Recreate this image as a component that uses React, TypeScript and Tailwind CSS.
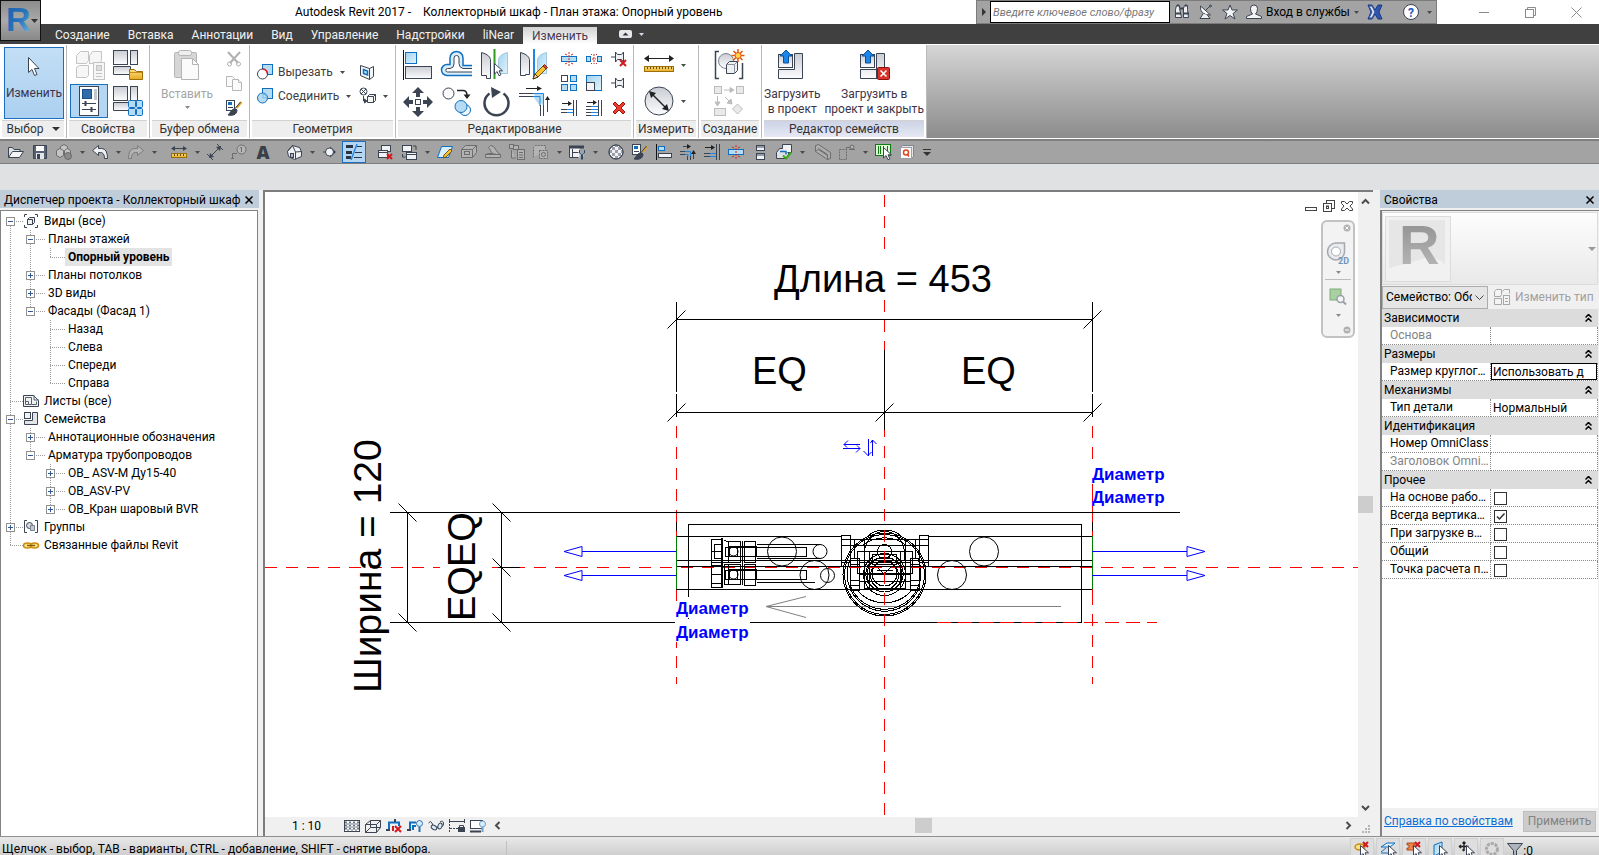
import React from "react";

type Kids = { children?: React.ReactNode };

const INK = "#3b4453";
const BLUE = "#0f6fc0";
const SKY = "#b5dcf3";

function Svg({ w = 16, h, children }: Kids & { w?: number; h?: number }) {
  const hh = h ?? w;
  return (
    <svg width={w} height={hh} viewBox={`0 0 ${w} ${hh}`} fill="none" stroke={INK} aria-hidden="true" className="shrink-0 overflow-visible">
      {children}
    </svg>
  );
}

function Caret({ color = "#4a4a4a" }: { color?: string }) {
  return (
    <svg width="5" height="3" viewBox="0 0 5 3" aria-hidden="true" className="shrink-0">
      <path d="M0 0h5L2.5 3z" fill={color} />
    </svg>
  );
}

function Cursor({ x, y }: { x: number; y: number }) {
  return (
    <path
      transform={`translate(${x} ${y})`}
      d="M.5.5v10.5l2.6-2.4 1.9 4.2 1.9-.9-1.9-4.1h3.5z"
      fill="#fff"
      stroke={INK}
    />
  );
}

function RedX({ x, y, s = 6 }: { x: number; y: number; s?: number }) {
  return (
    <path
      d={`M${x} ${y}l${s} ${s}M${x + s} ${y}l${-s} ${s}`}
      stroke="#d3181f"
      strokeWidth="2"
    />
  );
}

const Gradients = () => (
  <svg width="0" height="0" className="absolute" aria-hidden="true">
    <defs>
      <linearGradient id="steel" x1="0" y1="0" x2="0" y2="1">
        <stop offset="0" stopColor="#c9ccd3" />
        <stop offset="1" stopColor="#fdfdfe" />
      </linearGradient>
      <linearGradient id="sky" x1="0" y1="0" x2="1" y2="1">
        <stop offset="0" stopColor="#9fd3ef" />
        <stop offset="1" stopColor="#e4f4fc" />
      </linearGradient>
      <linearGradient id="gold" x1="0" y1="0" x2="0" y2="1">
        <stop offset="0" stopColor="#fbe08a" />
        <stop offset="1" stopColor="#e8ab1c" />
      </linearGradient>
      <linearGradient id="logo" x1="0" y1="0" x2="1" y2="1">
        <stop offset="0" stopColor="#1a5ea6" />
        <stop offset="0.55" stopColor="#2774bd" />
        <stop offset="1" stopColor="#7fc0e2" />
      </linearGradient>
      <linearGradient id="greyLogo" x1="0" y1="0" x2="0" y2="1">
        <stop offset="0" stopColor="#8c8c8c" />
        <stop offset="1" stopColor="#bcbcbc" />
      </linearGradient>
    </defs>
  </svg>
);

/* ---------- large ribbon icons ---------- */

const FamilyTypesGrey = () => (
  <Svg w={32}>
    <g stroke="#c4c4c4" fill="#f6f6f6">
      <path d="M2.5 6.5l4-4h8v9l-2 3h-10z" />
      <path d="M15.500 6.500l3-4h9v9l-2 3h-10z" />
      <path d="M2.500 18.500l3-2h9v10l-2 2h-10z" />
      <rect x="19.500" y="13.500" width="11" height="17" />
      <rect x="22.500" y="16.500" width="5" height="5" fill="#ddd" />
      <path d="M22 24.500h6M22 27.500h6" />
    </g>
  </Svg>
);

const PropsPalette = () => (
  <Svg w={24} h={32}>
    <rect x="2.500" y="1.500" width="19" height="29" fill="#fff" />
    <rect x="5.500" y="4.500" width="9" height="9" fill="#2f6ca8" stroke="#1d4e86" />
    <rect x="17" y="4" width="3" height="11" fill="#c2c6cd" stroke="none" />
    <path d="M5 18.500h14M5 24.500h14" />
    <path d="M8.500 16v5M14.500 22v5" strokeWidth="2" />
  </Svg>
);

const PanelsIcon = ({ children }: Kids) => (
  <Svg w={32}>
    <rect x="1.500" y="1.500" width="14" height="14" fill="url(#steel)" />
    <rect x="18.500" y="1.500" width="7" height="14" fill="url(#steel)" />
    <path d="M1.500 17.500h17v8h-17z" fill="url(#steel)" />
    {children}
  </Svg>
);

const FolderCategory = () => (
  <PanelsIcon>
    <path d="M17.500 20.500h5l2 2h6v8h-13z" fill="url(#gold)" stroke="#9c6f0b" />
    <path d="M17 23.500h13" stroke="#c18f1a" />
  </PanelsIcon>
);

const TypesBlue = () => (
  <PanelsIcon>
    <g fill={SKY} stroke={BLUE}>
      <rect x="16.500" y="15.500" width="7" height="7" rx="1" />
      <rect x="24.500" y="15.500" width="6" height="7" rx="1" />
      <rect x="16.500" y="23.500" width="7" height="7" rx="1" />
      <rect x="24.500" y="23.500" width="6" height="7" rx="1" />
    </g>
  </PanelsIcon>
);

const PasteGrey = () => (
  <Svg w={28} h={32}>
    <g stroke="#b4b4b4">
      <rect x="1.500" y="3.500" width="22" height="25" rx="1" fill="#d6d6d6" />
      <rect x="5.500" y="1.500" width="13" height="5" rx="2" fill="#eee" />
      <path d="M8.500 9.500h11l6 6v15h-17z" fill="#fbfbfb" />
      <path d="M19.500 9.500v6h6" />
    </g>
  </Svg>
);

const CutGrey = () => (
  <Svg>
    <g stroke="#b0b0b0">
      <path d="M2 1l10 11M14 1L4 12" strokeWidth="2" />
      <circle cx="3.500" cy="13" r="2" />
      <circle cx="12.500" cy="13" r="2" />
    </g>
  </Svg>
);

const CopyGrey = () => (
  <Svg>
    <g stroke="#b8b8b8" fill="#fafafa">
      <path d="M.5 1.500h6l2 2v8h-8z" />
      <path d="M6.500 4.500h6l3 3v8h-9z" />
      <path d="M12.500 4.500v3h3" />
    </g>
  </Svg>
);

const MatchType = () => (
  <Svg>
    <rect x=".5" y=".5" width="8" height="10" fill="#fff" />
    <rect x="2" y="2" width="4" height="3" fill={BLUE} stroke="none" />
    <path d="M2 7.500h5" />
    <path d="M15.500 2l-5 6" stroke="#e0a21c" strokeWidth="2" />
    <path d="M14.500 2l-5 6" stroke={INK} strokeWidth="1" />
    <path d="M10 9c-4-1-5 3-8 6 4 1 9 0 9-5z" fill={INK} />
  </Svg>
);

const CutGeom = () => (
  <Svg>
    <rect x="5.500" y=".5" width="10" height="10" fill={SKY} stroke={BLUE} />
    <circle cx="5.500" cy="10" r="5" fill="#fff" />
    <path d="M5.500 5a5 5 0 0 1 5 5" stroke="#e0161c" strokeWidth="1.500" />
  </Svg>
);

const JoinGeom = () => (
  <Svg>
    <rect x="5.500" y=".5" width="10" height="10" fill={SKY} stroke={BLUE} />
    <circle cx="5.500" cy="10" r="5" fill={SKY} stroke={BLUE} />
    <path d="M6 6v4h4a5 5 0 0 0-4-4" fill={SKY} stroke="#7dbde4" />
  </Svg>
);

const CutOpening = () => (
  <Svg>
    <path d="M1.500 1.500l9 3 4-2v10l-4 3-9-4z" fill="#f4f5f7" />
    <path d="M10.500 4.500v11" />
    <path d="M4.500 5.500l4 1.500v4l-4-1.500z" fill={SKY} stroke={BLUE} strokeWidth="1.500" />
  </Svg>
);

const SplitFace = () => (
  <Svg w={18}>
    <circle cx="4.500" cy="4.500" r="3.500" />
    <path d="M2 2l5 5M7 2L2 7M4.500 9v5H7" />
    <path d="M5.500 12l2.500 2-2.500 2z" fill={INK} />
    <path d="M8.500 9.500l2-2h6v6l-2 2h-6z" fill="#f7f7f8" />
    <path d="M8.500 9.500h6v6M14.500 9.500l2-2" />
  </Svg>
);

const AlignBig = () => (
  <Svg w={32}>
    <path d="M1.500 1v30" stroke="#111" strokeWidth="1" />
    <rect x="3.500" y="3.500" width="11" height="11" fill="url(#sky)" stroke={BLUE} />
    <rect x="3.500" y="17.500" width="26" height="12" fill="url(#steel)" />
  </Svg>
);

const OffsetBig = () => (
  <Svg w={32}>
    <path d="M31 16.500h-9V9a6.500 6.500 0 0 0-13 0v6.500H6a5 5 0 0 0 0 11h25" stroke={BLUE} fill="#d9eefa" strokeWidth="1.500" />
    <path d="M31 19.500h-9q-4-1-4-5V9a2.500 2.500 0 0 0-5 0v6q0 4-4 4.500H6.500a1.500 1.500 0 0 0 0 3.500H31" fill="#fff" />
  </Svg>
);

const MirrorPick = () => (
  <Svg w={32}>
    <path d="M1.500 3.500q8 2 9 7v19h-4v-3h-5z" fill="url(#steel)" />
    <path d="M27.500 3.500q-8 2-9 7v14h9z" fill="url(#sky)" stroke="#9fc6de" />
    <path d="M14.500 0v30" stroke="#2f9a1e" strokeWidth="2" />
    <Cursor x={14} y={14} />
  </Svg>
);

const Pencil = ({ x, y }: { x: number; y: number }) => (
  <g transform={`translate(${x} ${y})`}>
    <path d="M0 15l2-5L11 1l3 3-9 9z" fill="#f7c331" stroke="#7b5310" />
    <path d="M0 15l2-5 3 3z" fill="#f8e2b8" stroke="#4a3510" />
    <path d="M10 2l1.500-1.500 3 3L13 5z" fill="#d64a3a" stroke="#7b2a10" />
  </g>
);

const MirrorDraw = () => (
  <Svg w={32}>
    <path d="M1.500 3.500q8 2 9 7v15h-4v1h-5z" fill="url(#steel)" />
    <path d="M27.500 3.500q-8 2-9 7v14h9z" fill="url(#sky)" stroke="#9fc6de" />
    <path d="M15 0v30" stroke="#1b86e8" strokeWidth="2" />
    <Pencil x={14} y={15} />
  </Svg>
);

const MoveBig = () => (
  <Svg w={32}>
    <g fill={INK} stroke="none">
      <path d="M16 1l6 6h-4v4h-4V7h-4z" />
      <path d="M16 31l6-6h-4v-4h-4v4h-4z" />
      <path d="M1 16l6-6v4h4v4H7v4z" />
      <path d="M31 16l-6-6v4h-4v4h4v4z" />
    </g>
    <rect x="13.500" y="13.500" width="5" height="5" fill="#fff" />
  </Svg>
);

const CopyBig = () => (
  <Svg w={32}>
    <circle cx="7.500" cy="7.500" r="5.500" fill="#fafafa" />
    <path d="M16 4.500h6q4 0 4 5" strokeWidth="1.500" stroke="#222" />
    <path d="M22.500 8.500h7L26 13z" fill="#222" stroke="none" />
    <circle cx="24" cy="24" r="5.500" fill="#eef8fd" stroke={BLUE} />
    <circle cx="20" cy="20.500" r="6" fill={SKY} stroke={BLUE} />
  </Svg>
);

const RotateBig = () => (
  <Svg w={32}>
    <path d="M9.500 7.500a12 12 0 1 0 14 0" strokeWidth="2.500" />
    <path d="M11 1l10 5-9 6z" fill={INK} stroke="none" />
  </Svg>
);

const TrimBig = () => (
  <Svg w={32}>
    <path d="M7 2.500h14" stroke="#222" />
    <path d="M18 0l5 2.500L18 5z" fill="#222" stroke="none" />
    <path d="M0 7.500h14M0 10.500h14" />
    <path d="M14 7.500h10.500V20M14 10.500h7V20" stroke="#1b86e8" strokeWidth="1" fill={SKY} />
    <path d="M21.500 19v11M24.500 19v11" />
    <path d="M28.500 12v14" />
    <path d="M26 14l2.500-4 2.500 4z" fill="#222" stroke="none" />
  </Svg>
);

const SplitSmall = () => (
  <Svg>
    <rect x=".5" y="5.500" width="15" height="5" fill={SKY} stroke={BLUE} />
    <path d="M8 1v14" stroke="#cf2c1a" strokeDasharray="2 1" />
    <path d="M4 3l2 1M12 3l-2 1M4 13l2-1M12 13l-2-1" stroke="#cf2c1a" />
  </Svg>
);

const SplitGap = () => (
  <Svg>
    <rect x=".5" y="5.500" width="4" height="5" fill={SKY} stroke={BLUE} />
    <rect x="11.500" y="5.500" width="4" height="5" fill={SKY} stroke={BLUE} />
    <path d="M8 3v10M6 8h4" stroke="#cf2c1a" strokeDasharray="2 1" />
    <path d="M5 3l1 1M11 3l-1 1M5 13l1-1M11 13l-1-1" stroke="#cf2c1a" />
  </Svg>
);

const PinBody = ({ c = INK }: { c?: string }) => (
  <g stroke={c} fill="#eef0f3">
    <path d="M0 8h5" />
    <path d="M4.500 3v10l2-2.500h4l2 2.500V3l-2 2.500h-4z" />
  </g>
);

const Unpin = () => (
  <Svg>
    <g transform="translate(0 -2)">
      <PinBody />
    </g>
    <RedX x={9} y={9} />
  </Svg>
);
const Pin = () => (
  <Svg>
    <PinBody />
  </Svg>
);

const ArrayIcon = () => (
  <Svg>
    <rect x=".5" y=".5" width="6" height="6" fill="#fff" />
    <g fill={SKY} stroke={BLUE}>
      <rect x="9.500" y=".5" width="6" height="6" />
      <rect x=".5" y="9.500" width="6" height="6" />
      <rect x="9.500" y="9.500" width="6" height="6" />
    </g>
  </Svg>
);

const ScaleIcon = () => (
  <Svg>
    <rect x=".5" y=".5" width="15" height="15" fill="url(#sky)" stroke={BLUE} />
    <rect x="0.500" y="7.500" width="8" height="8" fill="#f4f4f6" />
  </Svg>
);

const TrimSingle = () => (
  <Svg>
    <path d="M1 3.500h8" stroke="#222" />
    <path d="M7 1l4 2.500L7 6z" fill="#222" stroke="none" />
    <path d="M0 9.500h6M0 12.500h6" />
    <path d="M6 9.500h6M6 12.500h6" stroke="#1b86e8" />
    <path d="M12.500 0v16M15.500 0v16" />
  </Svg>
);

const TrimMulti = () => (
  <Svg>
    <path d="M1 2.500h7" stroke="#222" />
    <path d="M7 0l4 2.500L7 5z" fill="#222" stroke="none" />
    <path d="M0 6.500h5M0 9.500h5M0 12.500h5M0 15.500h5" />
    <path d="M5 6.500h7M5 9.500h7M5 12.500h7M5 15.500h7" stroke="#1b86e8" />
    <path d="M12.500 0v16M15.500 0v16" />
  </Svg>
);

const DeleteX = () => (
  <Svg>
    <path d="M4 2l4 4 4-4 2 2-4 4 4 4-2 2-4-4-4 4-2-2 4-4-4-4z" fill="#e8402f" stroke="#a3130d" />
  </Svg>
);

const MeasureBig = () => (
  <Svg w={30} h={24}>
    <path d="M3 5.500h24" stroke="#222" />
    <path d="M0 5.500L5 2v7zM30 5.500L25 2v7z" fill="#222" stroke="none" />
    <rect x=".5" y="13.500" width="29" height="5" fill="url(#gold)" stroke="#9c6f0b" />
    <path d="M3.500 14v2M6.500 14v2M9.500 14v2M12.500 14v2M15.500 14v2M18.500 14v2M21.500 14v2M24.500 14v2M27.500 14v2" stroke="#6b4b06" />
  </Svg>
);

const DiameterBig = () => (
  <Svg w={30}>
    <circle cx="15" cy="15" r="14" fill="url(#steel)" />
    <path d="M7 7l16 16" stroke="#222" strokeWidth="1.500" />
    <path d="M5 5l7 2-5 5zM25 25l-7-2 5-5z" fill="#222" stroke="none" />
  </Svg>
);

const CreateBig = () => (
  <Svg w={32}>
    <path d="M6 2.500H2.500v27H6M26 29.500h3.500V14" strokeWidth="1.500" />
    <circle cx="13" cy="12" r="7.500" fill="url(#steel)" stroke="#7c8490" />
    <path d="M13.500 15.500l3-3h8v9l-3 3h-8z" fill="#eef0f3" />
    <path d="M13.500 15.500h8v9M21.500 15.500l3-3" stroke="#8b93a0" />
    <path d="M25 0v13M18.500 6.500h13M20.500 2l9 9M29.500 2l-9 9" stroke="#e2560f" strokeWidth="1.500" />
    <circle cx="25" cy="6.500" r="3" fill="#ffd34c" stroke="#e2560f" />
  </Svg>
);

const CreateGrey = () => (
  <Svg w={32}>
    <g stroke="#bdbdbd" fill="#e9e9e9">
      <rect x="1.500" y="1.500" width="7" height="7" />
      <rect x="23.500" y="1.500" width="7" height="7" />
      <rect x="1.500" y="23.500" width="11" height="7" />
      <path d="M24.500 19l5 5-5 5-5-5z" />
      <path d="M11 5h8M4.500 11v7M12 12l5 5" />
      <path d="M17 2.500l4 2.500-4 2.500zM2 17h5l-2.500 4zM14 18l5 1-1-5z" fill="#bdbdbd" />
    </g>
  </Svg>
);

const LoadIcon = ({ close = false }: { close?: boolean }) => (
  <Svg w={32}>
    <rect x="2.500" y="5.500" width="14" height="13" fill="url(#steel)" />
    <path d="M18.500 4.500h8v25h-24v-9h16z" fill="url(#steel)" />
    {close && <path d="M2 20.500h24M18.500 20v9" />}
    <path d="M10 1l6 6h-3.500v7h-5V7H4z" fill="#1b86e8" stroke="#0b4f96" />
    {close && (
      <g>
        <rect x="19.500" y="18.500" width="12" height="12" rx="1" fill="#d8322c" stroke="#8f1210" />
        <path d="M22.500 21.500l6 6M28.500 21.500l-6 6" stroke="#fff" strokeWidth="1.500" />
      </g>
    )}
  </Svg>
);

/* ---------- quick access icons ---------- */

const GR = "#6d6d6d";

const QOpen = () => (
  <Svg>
    <path d="M.5 13.500v-10h4l1.500 2h6v3" fill="#dfe1e5" />
    <path d="M.5 13.500l4-6h11l-4 6z" fill="#f4f4f6" />
  </Svg>
);
const QSave = () => (
  <Svg>
    <path d="M1.500 1.500h13v13h-13z" fill="#596273" />
    <rect x="4" y="2" width="8" height="5" fill="#fff" stroke="none" />
    <rect x="4" y="9" width="8" height="6" fill="#e3e5ea" stroke="none" />
    <rect x="5" y="10" width="3" height="5" fill={INK} stroke="none" />
  </Svg>
);
const QCubes = () => (
  <Svg>
    <g stroke={GR} fill="#c4c4c4">
      <path d="M4.500 2.500l3.500-2 3.500 2v4l-3.500 2-3.500-2z" />
      <path d="M.5 6.500l3.500-2 3.500 2v5l-3.500 2-3.500-2z" />
      <path d="M8.500 6.500l3-2 3 2v5l-3 2-3-2z" />
      <circle cx="12" cy="12" r="3.500" fill="#8a8a8a" />
    </g>
  </Svg>
);
const QUndo = () => (
  <Svg>
    <path d="M.5 6.500l6-5v3h3q6 0 6 10h-3q0-6-4-6h-2v3z" fill="#eef0f3" />
  </Svg>
);
const QRedo = () => (
  <Svg>
    <path d="M15.500 6.500l-6-5v3h-3q-6 0-6 10h3q0-6 4-6h2v3z" fill="#b3b3b3" stroke="#7c7c7c" />
  </Svg>
);
const QMeasure = () => (
  <Svg>
    <path d="M2 4.500h12" />
    <path d="M0 4.500L4 2v5zM16 4.500L12 2v5z" fill={INK} stroke="none" />
    <rect x=".5" y="9.500" width="15" height="4" fill="url(#gold)" stroke="#9c6f0b" />
    <path d="M3.500 10v2M6.500 10v2M9.500 10v2M12.500 10v2" stroke="#6b4b06" />
  </Svg>
);
const QDim = () => (
  <Svg>
    <path d="M3 13L13 3M0 10l6 6M10 0l6 6" />
    <path d="M2 14l1-5 4 4zM14 2l-5 1 4 4z" fill={INK} stroke="none" />
  </Svg>
);
const QTag = () => (
  <Svg>
    <circle cx="10.500" cy="5.500" r="4.500" stroke={GR} fill="#b5b5b5" />
    <path d="M10.500 3v5M9 4.500L10.500 3M6 9.500H1.500v5M0 14.500h3" stroke={GR} />
  </Svg>
);
const QText = () => (
  <span className="font-['Open_Sans',sans-serif] text-[18px] leading-[20px] font-extrabold text-[#3b3f47]">А</span>
);
const QHouse = () => (
  <Svg>
    <path d="M1.500 7.500l5-6 7 2 2 4v5l-7 3-6-3z" fill="#eef0f3" />
    <path d="M1.500 7.500l5-6 3 6.500v7M9.500 8l6-.5" />
    <rect x="4.500" y="9.500" width="3" height="4" fill="#aeb4be" />
  </Svg>
);
const QSection = () => (
  <Svg>
    <path d="M8 2.500L14 8l-6 5.500z" fill={INK} stroke="none" />
    <circle cx="7.500" cy="8" r="4" fill="#f4f4f6" />
    <path d="M1 8h2.500" />
  </Svg>
);
const QThin = () => (
  <Svg>
    <path d="M0 2.500h7M0 8.500h6M0 13.500h5" strokeWidth="3" stroke="#2b3442" />
    <path d="M10 2.500h6M9 8.500h7M8 13.500h8" stroke="#2b3442" />
    <path d="M11 0L5 16" stroke="#2a8ae0" strokeWidth="1.500" />
  </Svg>
);
const QCloseHidden = () => (
  <Svg>
    <rect x="4.500" y="1.500" width="9" height="6" fill="#f1f2f4" />
    <rect x="1.500" y="6.500" width="9" height="7" fill="#f1f2f4" />
    <path d="M2 8.500h8" />
    <RedX x={10} y={10} s={5} />
  </Svg>
);
const QSwitch = () => (
  <Svg>
    <rect x="1.500" y="1.500" width="9" height="6" fill="#f1f2f4" />
    <rect x="5.500" y="8.500" width="10" height="7" fill="#f1f2f4" />
    <path d="M6 10.500h9M12 2h3v4M1.500 10v3h3" />
  </Svg>
);
const QEdit = () => (
  <Svg>
    <path d="M4.500 2.500h11l-4 11h-11z" fill="#d8eefa" stroke={BLUE} />
    <path d="M6 14l1-3 6-6 2 2-6 6z" fill="#f7c331" stroke="#7b5310" />
  </Svg>
);
const QExtrude = () => (
  <Svg>
    <g stroke={GR} fill="#b3b3b3">
      <path d="M.5 5.500l4-4h11v7l-4 5h-11z" />
      <path d="M.5 5.500h11v8M11.500 5.500l4-4" />
      <rect x="3.500" y="7.500" width="5" height="3" />
    </g>
  </Svg>
);
const QBlend = () => (
  <Svg>
    <path d="M.5 13.500v-3l3-1h4l-4-6 2-2 3 1 5 7 2 1v3z" stroke={GR} fill="#b3b3b3" />
    <path d="M.5 10.500h15M7.500 9.500l4 1" stroke={GR} />
  </Svg>
);
const QSheets = () => (
  <Svg>
    <g stroke={GR} fill="#b3b3b3">
      <rect x=".5" y=".5" width="4" height="4" />
      <rect x="4.500" y="1.500" width="5" height="4" />
      <path d="M2.500 6v8h4" />
      <rect x="8.500" y="5.500" width="7" height="10" />
      <path d="M10 8.500h4M10 11h4M10 13.500h4" />
    </g>
  </Svg>
);
const QGear = () => (
  <Svg>
    <g stroke={GR} fill="#b3b3b3">
      <path d="M.5 13.500v-10l2-2h10v5" strokeDasharray="2 1" />
      <rect x="6.500" y="6.500" width="8" height="8" strokeDasharray="2 1" />
      <circle cx="10.500" cy="10.500" r="2" />
    </g>
  </Svg>
);
const QSchedule = () => (
  <Svg>
    <path d="M.5 4h10v9.500H.5z" fill="#f1f2f4" stroke="none" />
    <path d="M0 3h15" strokeWidth="3" />
    <path d="M.5 4v9.500h9M3.500 5v8M3.500 8.500h6" />
    <path d="M10.500 6v3l2 1.500v5M15.500 6v3l-2 1.500v5" stroke="#2b4a70" fill="#d8eefa" />
  </Svg>
);
const QSphere = () => (
  <Svg>
    <circle cx="8" cy="8" r="7" fill="#f4f4f6" />
    <g fill="#9aa0aa" stroke="none">
      <path d="M4 3h3v3H4zM10 3h3v3h-3zM1 6h3v3H1zM7 6h3v3H7zM13 6h2v3h-2zM4 9h3v3H4zM10 9h3v3h-3zM7 12h3v3H7zM7 1h3v2H7z" />
    </g>
    <circle cx="8" cy="8" r="7" />
  </Svg>
);
const QAlign = () => (
  <Svg>
    <path d="M.5 0v16" stroke="#111" />
    <rect x="2.500" y="2.500" width="6" height="4" fill={SKY} stroke={BLUE} />
    <rect x="2.500" y="9.500" width="13" height="4" fill="#f1f2f4" />
  </Svg>
);
const QTrim = () => (
  <Svg>
    <path d="M3 2.500h6" />
    <path d="M7 0l4 2.500L7 5z" fill="#222" stroke="none" />
    <path d="M0 7.500h5M0 10.500h5" />
    <path d="M5 7.500h5.500V12M5 10.500h3V12" stroke="#1b86e8" />
    <path d="M7.500 12v4M10.500 12v4M13.500 9v6" />
    <path d="M11 10l2.500-4L16 10z" fill="#222" stroke="none" />
  </Svg>
);
const QCascade = () => (
  <Svg>
    <rect x="4.500" y="1.500" width="8" height="5" fill="#f1f2f4" />
    <rect x="4.500" y="9.500" width="8" height="6" fill="#f1f2f4" />
    <path d="M4 3h8M4 11h8" />
  </Svg>
);
const QLoad = () => (
  <Svg w={18} h={16}>
    <path d="M1.500 8.500l3-4h9v6l-2 4h-10z" fill="#dfe1e5" />
    <path d="M7.500 4.500v-4h9v8h-4" fill="#f1f2f4" />
    <path d="M5 7.500h6v3" stroke={BLUE} strokeWidth="1.500" />
    <path d="M8 11.500l3 3 5-6" stroke="#3aa61e" strokeWidth="2" />
  </Svg>
);
const QBeam = () => (
  <Svg>
    <g stroke={GR} fill="#adadad">
      <path d="M.5 1.500l3-1 12 8v6l-3 1-12-8z" />
      <path d="M3.500 4.500l9 6v5M.5 7.500l3-2 9 6" />
    </g>
  </Svg>
);
const QRoute = () => (
  <Svg>
    <g stroke={GR}>
      <rect x=".5" y="5.500" width="7" height="10" strokeDasharray="2 1" />
      <path d="M7.500 5.500V3.500h4" />
      <circle cx="13" cy="3" r="2" fill="#b3b3b3" />
      <path d="M10 5.500h6" />
    </g>
  </Svg>
);
const QBarcode = () => (
  <Svg>
    <rect x=".5" y=".5" width="15" height="11" fill="#e2f7d8" stroke="#0a7c12" />
    <path d="M3.500 2v8M5.500 2v8M8.500 2v6M12.500 2v6" stroke="#0a7c12" />
    <Cursor x={8} y={3} />
  </Svg>
);
const QCube = () => (
  <Svg>
    <path d="M1.500 3.500l2-2h11v11l-2 2h-11z" fill="#e4e6ea" stroke="#7d8592" />
    <rect x="1.500" y="3.500" width="11" height="11" fill="#fff" stroke="#9aa1ac" />
    <circle cx="7" cy="8.500" r="2.500" stroke="#e2461f" strokeWidth="1.500" />
    <path d="M8 10l2 2.500" stroke="#e2461f" strokeWidth="1.500" />
  </Svg>
);

/* ---------- shared controls ---------- */

function IconButton({ label, children, className = "" }: Kids & { label: string; className?: string }) {
  return (
    <button type="button" aria-label={label} title={label} className={`flex shrink-0 items-center justify-center ${className}`}>
      {children}
    </button>
  );
}

function Panel({ title, body, className = "", tone = "bg-[#eeeeee]", caret = false }: { title: string; body: React.ReactNode; className?: string; tone?: string; caret?: boolean }) {
  return (
    <section className={`flex shrink-0 flex-col border-r border-[#b9b9b9] bg-white ${className}`}>
      <div className="flex h-[75px] pt-[2px]">{body}</div>
      <h2 className={`mx-[2px] flex h-[17px] items-center justify-center gap-2 border-t border-[#d2d2d2] leading-[16px] text-[#333] ${tone}`}>
        {title}
        {caret && (
          <svg width="8" height="4" viewBox="0 0 8 4" aria-hidden="true">
            <path d="M0 0h8L4 4z" fill="#333" />
          </svg>
        )}
      </h2>
    </section>
  );
}

function TitleBar() {
  return (
    <header className="flex h-6 items-stretch bg-white">
      <h1 className="flex items-center gap-3 pl-[295px] text-black">
        <span>Autodesk Revit 2017 -</span>
        <span>Коллекторный шкаф - План этажа: Опорный уровень</span>
      </h1>
      <div className="ml-auto flex items-center border border-[#7c7c7c] bg-[#a3a3a3] pr-1">
        <IconButton label="Свернуть поиск" className="w-[13px]">
          <svg width="4" height="8" viewBox="0 0 4 8" aria-hidden="true">
            <path d="M0 0v8l4-4z" fill="#333" />
          </svg>
        </IconButton>
        <input
          aria-label="Поиск"
          placeholder="Введите ключевое слово/фразу"
          className="h-[22px] w-[180px] border border-black bg-white px-[2px] text-[11px] italic placeholder:text-[#777]"
        />
        <IconButton label="Найти" className="w-6">
          <Svg>
            <path d="M2.500 1.500h3v3l2 9h-6v-8zM10.500 1.500h3v4l1 8h-5v-9z" fill="#eef0f3" />
            <path d="M6 4.500h4M1 9.500h6M9 9.500h6M3 1.500h2M11 1.500h2" strokeWidth="2" />
          </Svg>
        </IconButton>
        <IconButton label="Центр связи" className="w-6">
          <Svg>
            <path d="M2.500 2q-1 9 10 9zM8 6l4-4" fill="#fff" />
            <path d="M5 10l-3 4.500h10l-3-4" fill="#eef0f3" />
            <circle cx="12.500" cy="2" r="1" />
          </Svg>
        </IconButton>
        <IconButton label="Избранное" className="w-6">
          <Svg>
            <path d="M8 1l2 5h5.500l-4.500 3.500 2 5.500-5-3.500L3 15l2-5.500L.5 6H6z" fill="#f4f4f6" />
          </Svg>
        </IconButton>
        <button type="button" className="flex w-[118px] items-center gap-1 pl-1 whitespace-nowrap text-black">
          <Svg>
            <path d="M4.500 4.500a3.500 3.500 0 0 1 7 0q0 4-2 5.500l6 2.500v2H.5v-2L6.500 10q-2-1.500-2-5.500z" fill="#f4f4f6" />
          </Svg>
          <span>Вход в службы</span>
          <Caret />
        </button>
        <IconButton label="Обмен приложениями" className="w-[30px]">
          <Svg>
            <path d="M1 1h4l3 5 3-5h4l-3 7 3 7h-4l-3-5-3 5H1l3-7z" fill="#2f55ad" stroke="#1d3a85" />
            <path d="M2 2h3l3 6-3 6H2l3-6z" fill="#dfe5f3" stroke="#2f55ad" />
          </Svg>
        </IconButton>
        <IconButton label="Справка" className="ml-[13px] gap-[8px]">
          <Svg>
            <circle cx="8" cy="8" r="7.500" fill="#fff" />
            <text x="8" y="12.500" textAnchor="middle" fontSize="12" fontWeight="bold" fill="#2156b8" stroke="none">?</text>
          </Svg>
          <Caret />
        </IconButton>
      </div>
      <div className="ml-6 flex items-stretch">
        <IconButton label="Свернуть" className="w-[46px]">
          <svg width="10" height="10" viewBox="0 0 10 10" stroke="#8a8a8a"><path d="M0 5.500h10" /></svg>
        </IconButton>
        <IconButton label="Развернуть" className="w-[46px]">
          <svg width="11" height="11" viewBox="0 0 11 11" stroke="#8a8a8a" fill="none"><rect x=".5" y="2.500" width="8" height="8" /><path d="M2.500 2V.5h8v8H9" /></svg>
        </IconButton>
        <IconButton label="Закрыть" className="w-[46px]">
          <svg width="11" height="11" viewBox="0 0 11 11" stroke="#8a8a8a"><path d="M.5.5l10 10M10.500.5l-10 10" /></svg>
        </IconButton>
      </div>
    </header>
  );
}

const tabs = ["Создание", "Вставка", "Аннотации", "Вид", "Управление", "Надстройки", "liNear"];

function TabBar() {
  return (
    <nav className="flex h-5 items-stretch bg-[#404040] pl-[46px] text-[#f2f2f2]">
      {tabs.map((t) => (
        <button key={t} type="button" className="px-[9px] pt-[2px] leading-[18px]">
          {t}
        </button>
      ))}
      <button type="button" aria-current="page" className="mt-[3px] bg-linear-to-b from-[#d2d2d2] to-white px-[9px] leading-[16px] text-[#4a3a52]">
        Изменить
      </button>
      <IconButton label="Свернуть ленту" className="ml-[22px] gap-[7px]">
        <svg width="13" height="8" viewBox="0 0 13 8"><rect width="13" height="8" rx="2" fill="#e8e8ec" /><path d="M3.500 5.500h6l-3-3z" fill="#333" /></svg>
        <Caret color="#d8d8e8" />
      </IconButton>
    </nav>
  );
}

const editBig: [string, () => React.ReactNode][] = [
  ["Выровнять", AlignBig], ["Смещение", OffsetBig], ["Зеркало - выбрать ось", MirrorPick], ["Зеркало - нарисовать ось", MirrorDraw],
  ["Перенести", MoveBig], ["Копировать", CopyBig], ["Повернуть", RotateBig], ["Обрезать в угол", TrimBig],
];
const editSmall: [string, () => React.ReactNode][] = [
  ["Разделить элемент", SplitSmall], ["Разделить с зазором", SplitGap], ["Открепить", Unpin],
  ["Массив", ArrayIcon], ["Масштаб", ScaleIcon], ["Прикрепить", Pin],
  ["Обрезать элемент", TrimSingle], ["Обрезать несколько", TrimMulti], ["Удалить", DeleteX],
];

function Ribbon() {
  return (
    <div className="flex h-[95px] items-stretch border-y border-white bg-linear-to-b from-[#d6d6d6] to-[#8c8c8c]">
      <Panel
        title="Выбор"
        caret
        className="w-[67px]"
        body={
          <button type="button" className="ml-1 flex h-[72px] w-[60px] flex-col items-center border border-[#1a6fc0] bg-linear-to-b from-[#c3def5] to-[#abd0f0] pt-2 text-[#3d3348]">
            <Svg w={14} h={22}>
              <path d="M1.500 1.500v15l3.500-3 2.500 6 2.500-1-2.500-6h4.500z" fill="#fff" />
            </Svg>
            <span className="mt-[7px] leading-4">Изменить</span>
          </button>
        }
      />
      <Panel
        title="Свойства"
        className="w-[83px]"
        body={
          <div className="grid grid-cols-[42px_34px] grid-rows-[36px_36px] items-center pl-[2px]">
            <IconButton label="Типоразмеры"><FamilyTypesGrey /></IconButton>
            <IconButton label="Категория и параметры семейства"><FolderCategory /></IconButton>
            <IconButton label="Свойства" className="ml-[1px] h-[34px] w-[38px] border border-[#1a6fc0] bg-[#b5d6f2]"><PropsPalette /></IconButton>
            <IconButton label="Типоразмеры в семействе"><TypesBlue /></IconButton>
          </div>
        }
      />
      <Panel
        title="Буфер обмена"
        className="w-[100px]"
        body={
          <>
            <button type="button" disabled className="flex w-[74px] flex-col items-center pt-[2px] text-[#a5a5a5]">
              <PasteGrey />
              <span className="mt-[5px] leading-4">Вставить</span>
              <span className="mt-[4px] flex"><Caret color="#8a8a8a" /></span>
            </button>
            <div className="grid w-5 grid-rows-3 items-center">
              <IconButton label="Вырезать в буфер"><CutGrey /></IconButton>
              <IconButton label="Копировать в буфер"><CopyGrey /></IconButton>
              <IconButton label="Копирование свойств"><MatchType /></IconButton>
            </div>
          </>
        }
      />
      <Panel
        title="Геометрия"
        className="w-[146px]"
        body={
          <div className="flex flex-col pt-[13px] pl-[7px] text-[#3d3d3d]">
            <div className="flex h-6 items-center">
              <button type="button" className="flex w-[102px] items-center"><CutGeom /><span className="mr-[7px] ml-[5px]">Вырезать</span><Caret /></button>
              <IconButton label="Проем"><CutOpening /></IconButton>
            </div>
            <div className="flex h-6 items-center">
              <button type="button" className="flex w-[102px] items-center"><JoinGeom /><span className="mr-[7px] ml-[5px]">Соединить</span><Caret /></button>
              <IconButton label="Разделить грань" className="gap-[6px]"><SplitFace /><Caret /></IconButton>
            </div>
          </div>
        }
      />
      <Panel
        title="Редактирование"
        className="w-[238px]"
        body={
          <>
            <div className="grid grid-cols-[39px_39px_39px_39px] grid-rows-2 items-center pl-[2px]">
              {editBig.map(([n, C]) => <IconButton key={n} label={n}><C /></IconButton>)}
            </div>
            <div className="grid grid-cols-[25px_25px_25px] grid-rows-3 items-center pl-[2px]">
              {editSmall.map(([n, C]) => <IconButton key={n} label={n}><C /></IconButton>)}
            </div>
          </>
        }
      />
      <Panel
        title="Измерить"
        className="w-[65px]"
        body={
          <div className="flex flex-col pl-[10px]">
            <IconButton label="Измерить расстояние" className="h-9 gap-[7px]"><MeasureBig /><Caret /></IconButton>
            <IconButton label="Размер диаметра" className="h-9 gap-[7px]"><DiameterBig /><Caret /></IconButton>
          </div>
        }
      />
      <Panel
        title="Создание"
        className="w-[63px]"
        body={
          <div className="flex flex-col pl-[14px]">
            <IconButton label="Создать группу" className="h-9"><CreateBig /></IconButton>
            <IconButton label="Создать подобный" className="h-9"><CreateGrey /></IconButton>
          </div>
        }
      />
      <Panel
        title="Редактор семейств"
        tone="bg-linear-to-b from-[#cdd3e6] to-[#e6e9f4]"
        className="w-[165px]"
        body={
          <div className="flex w-full justify-center gap-1 pt-[2px] leading-[15px] whitespace-nowrap text-[#3d3348]">
            <button type="button" className="flex flex-col items-center"><LoadIcon /><span className="mt-[6px]">Загрузить<br />в проект</span></button>
            <button type="button" className="flex flex-col items-center"><LoadIcon close /><span className="mt-[6px]">Загрузить в<br />проект и закрыть</span></button>
          </div>
        }
      />
    </div>
  );
}

type QItem = [string, (() => React.ReactNode)?];
const GAP: QItem = ["gap"];
const HALF: QItem = ["half"];
const DROP: QItem = ["drop"];
const quick: QItem[] = [
  ["Открыть", QOpen], ["Сохранить", QSave], ["Синхронизировать", QCubes], DROP, ["Отменить", QUndo], DROP, ["Повторить", QRedo], DROP, GAP,
  ["Измерить", QMeasure], DROP, ["Параллельный размер", QDim], ["Марка", QTag], ["Текст", QText], GAP,
  ["3D вид", QHouse], DROP, ["Разрез", QSection], ["Тонкие линии", QThin], GAP,
  ["Закрыть скрытые окна", QCloseHidden], ["Переключение окон", QSwitch], DROP,
  ["Редактировать границу", QEdit], ["Выдавливание", QExtrude], ["Переход", QBlend], ["Листы", QSheets], ["Настройки", QGear], DROP,
  ["Спецификация", QSchedule], DROP, HALF, ["Материалы", QSphere], ["Копировать свойства", MatchType], ["Выровнять", QAlign],
  ["Обрезать", QTrim], ["Обрезать элемент", TrimSingle], ["Разделить", SplitSmall], ["Каскад", QCascade], ["Загрузить", QLoad], DROP, HALF,
  ["Балка", QBeam], ["Трасса", QRoute], DROP, ["Штрихкод", QBarcode], ["Куб", QCube],
];

function QuickBar() {
  return (
    <div role="toolbar" aria-label="Панель быстрого доступа" className="flex h-[25px] items-center border-t-2 border-b border-[#7f7f7f] bg-[#a3a3a3] pl-1">
      {quick.map(([name, Icon], i) => {
        if (name === "gap") return <span key={i} className="h-4 w-[7px]" />;
        if (name === "half") return <span key={i} className="h-4 w-[3px]" />;
        if (name === "drop" || !Icon)
          return <IconButton key={i} label="Список" className="h-5 w-3"><Caret /></IconButton>;
        return (
          <IconButton key={i} label={name} className={name === "Тонкие линии" ? "h-[22px] w-6 border border-[#1a6fc0] bg-[#b5d6f2]" : "h-[22px] w-6"}>
            <Icon />
          </IconButton>
        );
      })}
      <IconButton label="Настройка панели" className="ml-[2px] h-5 w-3">
        <svg width="8" height="7" viewBox="0 0 8 7"><path d="M0 .5h8" stroke="#333" /><path d="M0 3h8L4 7z" fill="#333" /></svg>
      </IconButton>
    </div>
  );
}

/* ---------- project browser ---------- */

type Node = { t: string; level: 0 | 1 | 2; box?: "+" | "-"; up: boolean[]; down: boolean[]; icon?: React.ReactNode; active?: boolean };

const tree: Node[] = [
  { t: "Виды (все)", level: 0, box: "-", up: [false], down: [true], icon: <Svg><path d="M4 1.500H1.500V4M12 1.500h2.500V4M1.500 12v2.500H4M14.500 12v2.500H12" /><path d="M4.500 6.500l2-2h5v5l-2 2h-5zM4.500 6.500h5v5" fill="#f1f2f4" /></Svg> },
  { t: "Планы этажей", level: 1, box: "-", up: [true, true], down: [true, true] },
  { t: "Опорный уровень", level: 2, up: [true, true, true], down: [true, true, false], active: true },
  { t: "Планы потолков", level: 1, box: "+", up: [true, true], down: [true, true] },
  { t: "3D виды", level: 1, box: "+", up: [true, true], down: [true, true] },
  { t: "Фасады (Фасад 1)", level: 1, box: "-", up: [true, true], down: [true, false] },
  { t: "Назад", level: 2, up: [true, false, true], down: [true, false, true] },
  { t: "Слева", level: 2, up: [true, false, true], down: [true, false, true] },
  { t: "Спереди", level: 2, up: [true, false, true], down: [true, false, true] },
  { t: "Справа", level: 2, up: [true, false, true], down: [true, false, false] },
  { t: "Листы (все)", level: 0, up: [true], down: [true], icon: <Svg><path d="M.5 2.500h10l5 5v6H.5z" fill="#f1f2f4" /><path d="M11 2v5h5M2.500 4.500h6v7h-6zM2.500 8.500h3v3M8.500 11.500h5v-3" stroke="#5a6372" /></Svg> },
  { t: "Семейства", level: 0, box: "-", up: [true], down: [true], icon: <Svg><rect x="1.500" y="1.500" width="6" height="6" fill="#f1f2f4" /><path d="M9.500 1.500h5v12h-13v-4h8z" fill="#e2e4e8" /></Svg> },
  { t: "Аннотационные обозначения", level: 1, box: "+", up: [true, true], down: [true, true] },
  { t: "Арматура трубопроводов", level: 1, box: "-", up: [true, true], down: [true, false] },
  { t: "ОВ_ ASV-M Ду15-40", level: 2, box: "+", up: [true, false, true], down: [true, false, true] },
  { t: "ОВ_ASV-PV", level: 2, box: "+", up: [true, false, true], down: [true, false, true] },
  { t: "ОВ_Кран шаровый BVR", level: 2, box: "+", up: [true, false, true], down: [true, false, false] },
  { t: "Группы", level: 0, box: "+", up: [true], down: [true], icon: <Svg><path d="M4 1.500H1.500v12H4M12 1.500h2.500v12H12" /><circle cx="6.500" cy="6.500" r="3" fill="#d7dae0" /><path d="M7.500 6.500h4v5h-4z" fill="#c3c8d1" stroke="#7c8490" /></Svg> },
  { t: "Связанные файлы Revit", level: 0, up: [true], down: [false], icon: <Svg><ellipse cx="4.500" cy="8.500" rx="4" ry="2.500" stroke="#c98e0d" strokeWidth="1.500" fill="#fbe08a" /><ellipse cx="11.500" cy="8.500" rx="4" ry="2.500" stroke="#c98e0d" strokeWidth="1.500" fill="#fbe08a" /><path d="M4 8.500h8" stroke="#8a5f06" strokeWidth="1.500" /></Svg> },
];

function Connector({ node }: { node: Node }) {
  const w = node.level === 0 ? 22 : node.level * 20 + 24;
  const cx = node.level * 20 + 9;
  return (
    <svg width={w} height="18" viewBox={`0 0 ${w} 18`} className="shrink-0" aria-hidden="true">
      <g stroke="#9a9a9a" strokeDasharray="1 1">
        {node.up.map((u, i) => u && <path key={i} d={`M${i * 20 + 9.5} 0v9`} />)}
        {node.down.map((d, i) => d && <path key={i} d={`M${i * 20 + 9.5} 10v8`} />)}
        <path d={`M${cx} 9.500H${w}`} />
      </g>
      {node.box && (
        <g>
          <rect x={cx - 3.5} y="5.500" width="8" height="8" fill="#fff" stroke="#919191" />
          <path d={node.box === "+" ? `M${cx - 2} 9.500h5M${cx + 0.5} 7v5` : `M${cx - 2} 9.500h5`} stroke="#31579b" />
        </g>
      )}
    </svg>
  );
}

function CloseMark() {
  return (
    <svg width="8" height="8" viewBox="0 0 8 8" aria-hidden="true"><path d="M.5.500l7 7M7.500.500l-7 7" stroke="#000" strokeWidth="1.500" /></svg>
  );
}

function Browser() {
  return (
    <aside className="flex w-[259px] shrink-0 flex-col text-black">
      <header className="flex h-[18px] items-center justify-between bg-[#bfcddb] pt-[1px] pr-[6px] pl-1">
        <h2 className="whitespace-nowrap">Диспетчер проекта - Коллекторный шкаф</h2>
        <IconButton label="Закрыть диспетчер"><CloseMark /></IconButton>
      </header>
      <ul role="tree" className="mt-[2px] mr-[1px] flex-1 border-t border-r border-l border-[#828282] bg-white pt-[1px]">
        {tree.map((n) => (
          <li key={n.t} role="treeitem" className="flex h-[18px] items-center leading-[18px] whitespace-nowrap">
            <Connector node={n} />
            {n.icon}
            <span className={n.active ? "bg-[#e3e3e3] px-[3px] font-bold" : n.level === 0 ? "px-[5px]" : "px-[3px]"}>{n.t}</span>
          </li>
        ))}
      </ul>
    </aside>
  );
}

/* ---------- drawing area ---------- */

function Drawing() {
  const tick = (x: number, y: number) => `M${x - 9} ${y + 9}l18-18`;
  const tickBack = (x: number, y: number) => `M${x - 9} ${y - 9}l18 18`;
  return (
    <svg viewBox="265 192 1093 625" className="block h-full w-full bg-white font-['Liberation_Sans',Arial,sans-serif]" fill="none" role="img" aria-label="План этажа: Опорный уровень">
      <g stroke="#f00" strokeDasharray="12 9">
        <path d="M265 567.500H440M534 567.500H1358" />
        <path d="M884.500 195v63M884.500 300v12M884.500 320v30M884.500 425V817" />
        <path d="M676.500 426V596M676.500 656V684M1092.500 426V464M1092.500 593V684" />
      </g>
      <g stroke="#f00">
        <path d="M492 567.500h6M517 567.500h8M676.500 510v26M676.500 589v12M1092.500 484v52M1092.500 589v6M676.500 642v6" />
      </g>
      <g stroke="#000" shapeRendering="crispEdges">
        <path d="M676.500 302v90M676.500 394v23M1092.500 302v90M1092.500 394v23" />
        <path d="M676 319.500h416M676 412.500h416M884.500 350v80" />
        <path d="M390 512.500H1180M390 622.500H1081M407.500 512v110M501.500 512v110M498 567.500h22" />
        <path d="M688.500 622V524.500H1081.500V622.500" />
        <path d="M676 536.500h165M928 536.500h164M676 560.500h416M676 566.500h416M676 589.500h416" />
        <path d="M676.500 522v9M1092.500 522v9" />
      </g>
      <path
        stroke="#000"
        d={[tick(676.5, 319.5), tick(1092.5, 319.5), tick(676.5, 412.5), tick(884.5, 412.5), tick(1092.5, 412.5), tickBack(407.5, 512.5), tickBack(407.5, 622.5), tickBack(501.5, 512.5), tickBack(501.5, 567.5), tickBack(501.5, 622.5)].join("")}
      />
      <path d="M676.500 536v53M1092.500 536v53" stroke="#008000" />
      <path d="M937 622.500h220" stroke="#f00" strokeDasharray="14 7" />

      <g stroke="#00f">
        <path d="M676 551.500h-94M676 575.500h-94M1092 551.500h95M1092 575.500h95" />
        <path d="M564 551.500l18-5v10zM564 575.500l18-5v10zM1205 551.500l-18-5v10zM1205 575.500l-18-5v10z" fill="#fff" />
        <path d="M860 444.500h-16l4-4M843 448.500h17l-4 4M844 444.500l3 3M860 448.500l-3-3" />
        <path d="M868.500 439v17l-5-5M872.500 456v-16l4 4M868.500 455l3-3M872.500 440l-2 3" />
      </g>

      <g stroke="#808080">
        <path d="M766 606.500h295M766 606.500l40-10M766 606.500l40 11" />
      </g>

      <g stroke="#000">
        <circle cx="782" cy="551.500" r="14.500" />
        <circle cx="820" cy="551.500" r="7" />
        <circle cx="814.500" cy="575" r="14.500" />
        <circle cx="827.500" cy="575.500" r="7" />
        <circle cx="984" cy="551.500" r="14.500" />
        <circle cx="952" cy="575" r="14.500" />
        <circle cx="733.500" cy="551.500" r="4.500" />
        <circle cx="733.500" cy="574.500" r="4.500" />
      </g>
      <g stroke="#000" shapeRendering="crispEdges">
        <path d="M711.500 539.500h10v26h-10zM714.500 544.500h7v14h-7zM711.500 551.500h10M711.500 562.500h17" />
        <path d="M711.500 565.500h10v22h-10zM711.500 574.500h10M711.500 583.500h10" />
        <path d="M722 538v50" strokeWidth="2" />
        <path d="M724 540.500l4.500 1v21M728.500 541.500h12v21h-12zM744.500 541.500h11v21h-11zM742.500 541v44M728.500 546.500h28M728.500 556.500h28" />
        <path d="M724.500 564.500h16v20h-16zM744.500 564.500h11v21h-11zM728.500 569.500h28M728.500 579.500h28M728.500 564v21" />
        <path d="M725.500 547.500h81v9h-81zM725.500 570.500h81v9h-81zM756.500 544.500H820M756.500 558.500H820M756.500 582.500h58M756.500 547v9M756.500 570v9" />
        <path d="M729.500 547v9h8v-9M729.500 570v9h8v-9" />
      </g>

      <g stroke="#000" shapeRendering="crispEdges">
        <circle cx="884.500" cy="574.500" r="41.500" />
        <circle cx="884.500" cy="574.500" r="40" />
        <path d="M850 560a36 36 0 0 0 69 28M851 587a36 36 0 0 0 67-28" />
        <path d="M857 590a36 36 0 0 0 55 0M862 546a35 35 0 0 1 45 0" />
        <path d="M864 560c-2-38 43-38 41 0M868 536c8-8 25-8 33 0" />
        <circle cx="884.500" cy="551.500" r="7" />
        <circle cx="884.500" cy="574.500" r="21" />
        <circle cx="884.500" cy="574.500" r="17.500" />
        <circle cx="884.500" cy="575.500" r="14" />
        <circle cx="884.500" cy="573.500" r="12.500" />
        <path d="M841.500 535.500h9v31h-9zM841.500 539.500h9M841.500 545.500h9M841.500 562.500h9" />
        <path d="M919.500 535.500h9v31h-9zM919.500 539.500h9M919.500 545.500h9M919.500 562.500h9" />
        <path d="M850.500 558.500h9v32h-9zM850.500 564.500h9M850.500 580.500h9M850.500 585.500h9" />
        <path d="M910.500 558.500h9v32h-9zM910.500 564.500h9M910.500 580.500h9M910.500 585.500h9" />
        <path d="M850.500 539.500h69M850.500 545.500h69M854.500 539v20M915.500 539v20" />
        <path d="M857.500 551.500h55v22h-55zM864.500 551.500h41v37h-41zM869.500 551v37M900.500 551v37" />
        <path d="M859 562.500h51M859 574.500h51M859 581.500h51M872.500 554h24v10h-24z" />
        <path d="M877.500 558.500h14M877.500 561.500h14M876.500 570.500h16M876 566l8 8 8-8" />
        <path d="M864 540v40M905 540v40M874 560a16 16 0 0 0 0 28M895 560a16 16 0 0 1 0 28" />
      </g>
      <g stroke="#f00">
        <path d="M884.500 509v12M884.500 530v12M884.500 551v12M884.500 572v12M884.500 593v12M884.500 614v12" />
        <path d="M849 567.500h12M869 567.500h12M911 567.500h12M932 567.500h12" />
      </g>

      <path d="M677 597h73v21h-73zM675 619h75v23h-75z" fill="#fff" />
      <g fill="#00f" fontSize="17" fontWeight="bold">
        <text x="1092" y="480">Диаметр</text>
        <text x="1092" y="503">Диаметр</text>
        <text x="676" y="614">Диаметр</text>
        <text x="676" y="638">Диаметр</text>
      </g>
      <g fill="#000" fontSize="38">
        <text x="774" y="292">Длина = 453</text>
        <text x="752" y="384">EQ</text>
        <text x="961" y="384">EQ</text>
        <text transform="translate(381 693) rotate(-90)" fontSize="39">Ширина = 120</text>
        <text transform="translate(475 621) rotate(-90)">EQ</text>
        <text transform="translate(475 567) rotate(-90)">EQ</text>
      </g>
    </svg>
  );
}

function NavBar() {
  return (
    <div className="absolute top-[28px] right-[3px] flex h-[118px] w-[34px] flex-col items-center rounded-md border-2 border-[#c2c2c2] bg-[#f3f3f3]">
      <IconButton label="Скрыть панель навигации" className="mt-[2px] mr-[2px] self-end">
        <svg width="8" height="8" viewBox="0 0 8 8"><circle cx="4" cy="4" r="3.500" fill="#b0b0b0" /><path d="M2.500 2.500l3 3M5.500 2.500l-3 3" stroke="#fff" /></svg>
      </IconButton>
      <IconButton label="Штурвал 2D" className="mt-[9px]">
        <svg width="26" height="24" viewBox="0 0 26 24" fill="none" className="overflow-visible">
          <path d="M11 2h8.500v9a8.500 8.500 0 1 1-8.500-9z" fill="#e9ebee" stroke="#a4a9b0" strokeWidth="1.500" />
          <circle cx="11" cy="10.500" r="4.500" fill="#fff" stroke="#a4a9b0" />
          <text x="13" y="23" fontSize="9" fontWeight="bold" fill="#6f93bd">2D</text>
        </svg>
      </IconButton>
      <IconButton label="Варианты штурвала" className="mt-[6px]"><Caret color="#8a8a8a" /></IconButton>
      <span className="mt-[5px] h-px w-[26px] bg-[#bcbcbc]" />
      <IconButton label="Показать область" className="mt-2">
        <svg width="18" height="18" viewBox="0 0 18 18" fill="none">
          <rect x="1" y="1" width="11" height="11" fill="#a9d0a0" stroke="#7fae78" />
          <circle cx="11.500" cy="11" r="3.500" fill="#f5f5f5" stroke="#9aa0a8" strokeWidth="1.500" />
          <path d="M14 13.500l3 3" stroke="#9aa0a8" strokeWidth="2" />
        </svg>
      </IconButton>
      <IconButton label="Варианты масштаба" className="mt-[8px]"><Caret color="#8a8a8a" /></IconButton>
      <IconButton label="Настройка навигации" className="mt-auto mr-[2px] mb-[2px] self-end">
        <svg width="8" height="8" viewBox="0 0 8 8"><circle cx="4" cy="4" r="3.500" fill="#b0b0b0" /><path d="M2 4h4" stroke="#fff" /></svg>
      </IconButton>
    </div>
  );
}

const Chevron = ({ d }: { d: string }) => (
  <svg width="9" height="9" viewBox="0 0 9 9" fill="none" stroke="#4d4d4d" strokeWidth="2" aria-hidden="true"><path d={d} /></svg>
);

const viewTools: [string, React.ReactNode][] = [
  ["Уровень детализации", <Svg><rect x=".5" y="2.500" width="15" height="11" fill="#fff" /><path d="M1 4.500h14M1 7.500h14M1 10.500h14" stroke="#6b7280" strokeWidth="2" strokeDasharray="2 2" /><path d="M3 6h12M3 9h12M3 12h12" stroke="#6b7280" strokeDasharray="2 2" /></Svg>],
  ["Визуальный стиль", <Svg><path d="M.5 6.500l5-4h10v7l-4 5H.5zM.5 6.500h11v8M11.500 6.500l4-4M5.500 2.500v7h10M5.500 9.500l-5 5" /></Svg>],
  ["Область обрезки", <Svg><path d="M3 12V4.500h10V8" stroke={BLUE} strokeWidth="2" /><path d="M0 12h4M9 4V1" stroke={INK} strokeWidth="2" /><path d="M7 8v5" stroke="#d3181f" strokeWidth="2" /><RedX x={9} y={8} /></Svg>],
  ["Показать область обрезки", <Svg><path d="M3 12V4.500h6M6 12V8h3" stroke={BLUE} strokeWidth="2" /><path d="M0 12h4" strokeWidth="2" /><circle cx="12.500" cy="5.500" r="3" fill="#d8eefa" stroke="#2a6fb5" /><path d="M12.500 9v5" stroke="#2a6fb5" strokeWidth="2" /></Svg>],
  ["Временное скрытие", <Svg><path d="M.5 5q2-3 3.500 0l1 3M8.500 10l1.500-1M12 4q3-2 3.500 1t-2 4" /><ellipse cx="6" cy="9.500" rx="3" ry="2" fill="#d8eefa" transform="rotate(30 6 9.500)" /><ellipse cx="12" cy="8" rx="2" ry="3" fill="#d8eefa" transform="rotate(20 12 8)" /></Svg>],
  ["Временные свойства вида", <Svg><path d="M.5 1v4M15.500 1v4M1 3.500h14" /><path d="M.5 6v8M1 10.500h8" strokeDasharray="2 1" /><rect x="9" y="9" width="7" height="5" fill={INK} stroke="none" /><path d="M10.500 9V7.500h4V9" /></Svg>],
  ["Показать зависимости", <Svg><rect x=".5" y="2.500" width="12" height="8" fill="#fff" /><path d="M0 13.500h11" strokeWidth="2" /><circle cx="12.500" cy="6" r="3" fill="#d8eefa" stroke="#6f9fcb" /><path d="M12.500 9v5" stroke="#6f9fcb" strokeWidth="2" /></Svg>],
];

function Viewport() {
  return (
    <main className="ml-[4px] flex min-w-0 flex-1 flex-col border-t-2 border-l-2 border-[#7d7d7d] bg-[#f0f0f0]">
      <div className="flex min-h-0 flex-1">
        <div className="relative min-w-0 flex-1">
          <Drawing />
          <div className="absolute top-[8px] right-[5px] flex items-center gap-[6px]">
            <IconButton label="Свернуть вид"><svg width="12" height="12" viewBox="0 0 12 12"><rect x=".5" y="7.500" width="11" height="3" fill="#fff" stroke="#444" /></svg></IconButton>
            <IconButton label="Восстановить вид"><svg width="12" height="12" viewBox="0 0 12 12" fill="#fff" stroke="#444"><rect x="3.500" y=".5" width="8" height="8" /><rect x=".5" y="3.500" width="8" height="8" /><rect x="3.500" y="6" width="2" height="2.500" /></svg></IconButton>
            <IconButton label="Закрыть вид"><svg width="12" height="12" viewBox="0 0 12 12" fill="#fff" stroke="#444"><path d="M.5 1.500h3L6 4l2.500-2.500h3v2L9 6l2.500 3v1.500h-3L6 8l-2.500 2.500h-3V9L3 6 .500 3.500z" /></svg></IconButton>
          </div>
          <NavBar />
        </div>
        <div className="flex w-[15px] flex-col items-center justify-between py-[5px]">
          <IconButton label="Прокрутить вверх"><Chevron d="M1 6.500L4.500 3 8 6.500" /></IconButton>
          <span className="h-[17px] w-full bg-[#cdcdcd]" />
          <IconButton label="Прокрутить вниз"><Chevron d="M1 3l3.500 3.500L8 3" /></IconButton>
        </div>
      </div>
      <div className="flex h-[19px] items-center pb-[2px]">
        <button type="button" className="w-[79px] pl-[27px] text-left text-black">1 : 10</button>
        <div className="flex gap-[5px]">
          {viewTools.map(([n, icon]) => <IconButton key={n} label={n}>{icon}</IconButton>)}
        </div>
        <IconButton label="Прокрутить влево" className="ml-[7px]"><Chevron d="M6.500 1L3 4.500 6.500 8" /></IconButton>
        <span className="flex h-full flex-1 items-center justify-center"><span className="h-[15px] w-[17px] bg-[#cdcdcd]" /></span>
        <IconButton label="Прокрутить вправо" className="mr-[9px]"><Chevron d="M2.500 1L6 4.500 2.500 8" /></IconButton>
        <svg width="9" height="9" viewBox="0 0 9 9" fill="#b5b5b5" className="mr-[2px] self-end" aria-hidden="true"><path d="M6 0h2v2H6zM6 3h2v2H6zM6 6h2v2H6zM3 3h2v2H3zM3 6h2v2H3zM0 6h2v2H0z" /></svg>
      </div>
    </main>
  );
}

/* ---------- properties ---------- */

type Prop = { name: string; value?: string; check?: boolean; dim?: boolean; edit?: boolean };
const groups: { title: string; rows: Prop[] }[] = [
  { title: "Зависимости", rows: [{ name: "Основа", value: "", dim: true }] },
  { title: "Размеры", rows: [{ name: "Размер круглого соединителя", value: "Использовать диаметр", edit: true }] },
  { title: "Механизмы", rows: [{ name: "Тип детали", value: "Нормальный" }] },
  { title: "Идентификация", rows: [{ name: "Номер OmniClass", value: "" }, { name: "Заголовок OmniClass", value: "", dim: true }] },
  {
    title: "Прочее",
    rows: [
      { name: "На основе рабочей плоскости", check: false },
      { name: "Всегда вертикально", check: true },
      { name: "При загрузке вырезать полости", check: false },
      { name: "Общий", check: false },
      { name: "Точка расчета площади", check: false },
    ],
  },
];

function PropRow({ p, id }: { p: Prop; id: string }) {
  return (
    <tr className="h-[18px]">
      <th scope="row" className={`border-r border-b border-dotted border-[#8a8a8a] p-0 pl-2 text-left font-normal ${p.dim ? "text-[#838383]" : ""}`}>
        <label htmlFor={id} className="block h-[17px] truncate leading-[16px]">{p.name}</label>
      </th>
      <td className="border-r border-b border-dotted border-[#8a8a8a] p-0">
        {p.check !== undefined ? (
          <span className="relative ml-[3px] flex h-[17px] items-end pb-[1px]">
            <input id={id} type="checkbox" defaultChecked={p.check} className="peer h-[13px] w-[13px] appearance-none border border-[#333] bg-white" />
            <svg width="13" height="13" viewBox="0 0 13 13" fill="none" className="pointer-events-none absolute bottom-[1px] left-0 hidden peer-checked:block" aria-hidden="true">
              <path d="M3 6.500L5.500 9l5-5.500" stroke="#333" strokeWidth="1.500" />
            </svg>
          </span>
        ) : (
          <input id={id} defaultValue={p.value} className={`block h-[17px] w-full bg-white leading-[16px] ${p.edit ? "border border-black pr-[12px] pl-[1px]" : "pl-[2px]"}`} />
        )}
      </td>
    </tr>
  );
}

function Properties() {
  return (
    <aside className="ml-[7px] flex w-[219px] shrink-0 flex-col bg-[#f0f0f0] text-black">
      <header className="flex h-[18px] items-center justify-between bg-[#bfcddb] pt-[1px] pr-[5px] pl-1">
        <h2>Свойства</h2>
        <IconButton label="Закрыть свойства"><CloseMark /></IconButton>
      </header>
      <div className="mt-[2px] flex flex-1 flex-col border-t border-l-2 border-[#828282] pr-[1px]">
        <button type="button" aria-label="Выбор типа" className="mt-[1px] flex h-[73px] items-center border border-[#dcdcdc] bg-linear-to-b from-[#fdfdfd] to-[#e9e9e9] pr-[1px] pl-[2px]">
          <span className="flex h-[66px] w-[66px] items-center justify-center border border-[#dcdcdc] bg-[#f1f1f1]">
            <svg width="62" height="62" viewBox="0 0 62 62" className="overflow-visible" aria-hidden="true">
              <path d="M2 2h56v44q-10-8-20-6Q20 46 2 50z" fill="#e6e6e6" />
              <text x="12" y="46" fontSize="56" fontWeight="bold" fontFamily="Liberation Sans" fill="url(#greyLogo)">R</text>
            </svg>
          </span>
          <svg width="8" height="4" viewBox="0 0 8 4" className="ml-auto" aria-hidden="true"><path d="M0 0h8L4 4z" fill="#9a9a9a" /></svg>
        </button>
        <div className="flex h-[24px] items-center">
          <span className="relative flex">
            <select aria-label="Семейство" className="h-[23px] w-[106px] appearance-none overflow-hidden border border-[#acacac] bg-[#e5e5e5] pr-[15px] pl-[3px]">
              <option>Семейство: Оборудование</option>
            </select>
            <svg width="9" height="6" viewBox="0 0 9 6" fill="none" stroke="#444" className="pointer-events-none absolute top-[9px] right-1" aria-hidden="true"><path d="M.5.500l4 4 4-4" /></svg>
          </span>
          <button type="button" disabled className="ml-[6px] flex items-center gap-[5px] whitespace-nowrap text-[#a0a0a0]">
            <Svg>
              <g stroke="#a8a8a8" fill="#f4f4f4">
                <path d="M.5 2.500l2-2h5v5l-1 2h-6zM8.500 2.500l2-2h5v4M.5 9.500h7v6h-7z" />
                <rect x="9.500" y="6.500" width="6" height="9" />
                <path d="M11 9.500h3M11 12.500h3" />
              </g>
            </Svg>
            Изменить тип
          </button>
        </div>
        <div className="flex-1 bg-white">
          <table className="w-full table-fixed border-separate border-spacing-0">
            <colgroup><col className="w-[109px]" /><col /></colgroup>
            {groups.map((g, gi) => (
              <tbody key={g.title}>
                <tr className="h-[18px] bg-[#dcdcdc]">
                  <th colSpan={2} scope="colgroup" className="p-0 text-left font-normal">
                    <button type="button" className="flex h-[18px] w-full items-center justify-between pr-[6px] pl-[2px] leading-[17px]">
                      {g.title}
                      <svg width="7" height="8" viewBox="0 0 7 8" fill="none" stroke="#000" aria-hidden="true"><path d="M.5 3.500l3-3 3 3M.5 7.500l3-3 3 3" strokeWidth="1.500" /></svg>
                    </button>
                  </th>
                </tr>
                {g.rows.map((p, i) => <PropRow key={p.name} p={p} id={`prop-${gi}-${i}`} />)}
              </tbody>
            ))}
          </table>
        </div>
        <footer className="flex h-[28px] items-center justify-between pr-[2px] pb-[2px] pl-[2px]">
          <a href="#help" className="text-[#0a6fd6] underline">Справка по свойствам</a>
          <button type="button" disabled className="h-[21px] w-[73px] border border-[#bfbfbf] bg-[#cccccc] text-[#838383]">Применить</button>
        </footer>
      </div>
    </aside>
  );
}

/* ---------- status bar ---------- */

const statusTools: [string, React.ReactNode][] = [
  ["Выбор связей", <Svg><ellipse cx="6" cy="6" rx="5" ry="3" fill="#fbe08a" stroke="#c98e0d" strokeWidth="1.500" /><RedX x={9} y={1} s={5} /><Cursor x={6} y={4} /></Svg>],
  ["Выбор основы", <Svg><path d="M1 6l6-4h8l-5 4zM1 11l5-4M1 12h7" fill="#d8eefa" stroke={BLUE} /><Cursor x={8} y={4} /></Svg>],
  ["Выбор прикрепленных", <Svg><path d="M1 2h8v2H7v3h2v2H1V7h2V4H1z" fill="#f08a4a" stroke="#b5471a" /><RedX x={9} y={1} s={5} /><Cursor x={7} y={4} /></Svg>],
  ["Выбор по грани", <Svg><path d="M2 4l8-3v10l-8 4z" fill="url(#sky)" stroke={BLUE} /><Cursor x={7} y={4} /></Svg>],
  ["Перетаскивание", <Svg><path d="M6 1v9M1.500 5.500h9M4.500 2.500L6 1l1.500 1.500M4.500 8.500L6 10M3 4L1.500 5.500 3 7" stroke="#222" strokeWidth="1.500" /><Cursor x={8} y={4} /></Svg>],
  ["Фоновые процессы", <Svg><circle cx="8" cy="8" r="5.500" stroke="#aaaaaa" strokeWidth="3" strokeDasharray="3 1" /></Svg>],
];

function StatusBar() {
  return (
    <footer className="h-[19px] overflow-hidden border-t border-[#8f8f8f]">
      <div className="flex h-[24px] items-center bg-linear-to-b from-[#e9e9e9] to-[#c6c6c6] text-black">
        <p className="w-[507px] shrink-0 border-r border-[#c0c0c0] pl-[2px] whitespace-nowrap">Щелчок - выбор, TAB - варианты, CTRL - добавление, SHIFT - снятие выбора.</p>
        <div className="ml-auto flex items-center gap-[2px] pr-[66px]">
          {statusTools.map(([n, icon]) => <IconButton key={n} label={n} className="h-[22px] w-6 border border-[#cfcfcf] bg-[#dedede]">{icon}</IconButton>)}
          <button type="button" aria-label="Фильтр" className="ml-[1px] flex items-center">
            <Svg><path d="M.5 2.500h15l-6 7v6l-3-2v-4z" fill="#aeb4be" /></Svg>
            <span className="pt-1">:0</span>
          </button>
        </div>
      </div>
    </footer>
  );
}

export default function App() {
  return (
    <div className="relative flex h-screen flex-col overflow-hidden bg-[#f0f0f0] font-[Roboto,'Open_Sans',sans-serif] text-[12px] leading-[16px]">
      <Gradients />
      <TitleBar />
      <TabBar />
      <button type="button" aria-label="Меню приложения" className="absolute top-0 left-0 flex h-[41px] w-[41px] items-center justify-center border border-[#111] bg-linear-to-b from-[#8c8c8c] via-[#aaaaaa] to-[#888888]">
        <svg width="37" height="37" viewBox="0 0 37 37" className="overflow-visible" aria-hidden="true">
          <text x="4" y="29" fontSize="34" fontWeight="bold" fontFamily="Liberation Sans" fill="url(#logo)">R</text>
          <path d="M29 17h7l-3.500 4z" fill="#333" />
        </svg>
      </button>
      <Ribbon />
      <QuickBar />
      <div className="h-[26px] shrink-0 bg-[#e0e1e3]" />
      <div className="flex min-h-0 flex-1">
        <Browser />
        <Viewport />
        <Properties />
      </div>
      <StatusBar />
    </div>
  );
}
